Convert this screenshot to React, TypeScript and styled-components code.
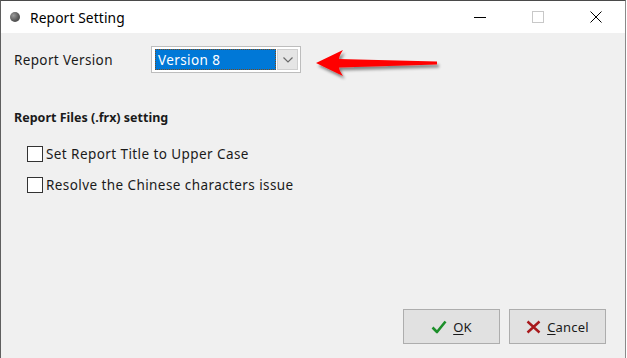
import React from "react";
import styled, { createGlobalStyle } from "styled-components";

const Global = createGlobalStyle`
  html, body { margin: 0; padding: 0; background: #ffffff; }
  body { font-family: "Noto Sans", "Open Sans", sans-serif; }
  * { box-sizing: border-box; }
`;

const Window = styled.div`
  width: 626px;
  height: 358px;
  border-top: 1px solid #4a4a4a;
  border-left: 1px solid #5f5f5f;
  border-right: 1px solid #8a8a8a;
  display: flex;
  flex-direction: column;
  position: relative;
  overflow: hidden;
`;

const TitleBar = styled.div`
  height: 32px;
  background: #ffffff;
  display: flex;
  align-items: center;
  flex-shrink: 0;
`;

const AppIcon = styled.div`
  width: 10px;
  height: 10px;
  border-radius: 50%;
  margin-left: 9px;
  margin-right: 10px;
  background: radial-gradient(circle at 35% 35%, #9a9a9a 0%, #5a5a5a 55%, #3a3a3a 100%);
`;

const Title = styled.div`
  font-family: "Noto Sans", sans-serif;
  font-size: 13.8px;
  color: #000;
  flex: 1;
  letter-spacing: 0.1px;
`;

const CaptionButton = styled.div`
  width: 58px;
  height: 32px;
  display: flex;
  align-items: center;
  justify-content: center;
`;

const Body = styled.div`
  flex: 1;
  background: #f0f0f0;
  display: flex;
  flex-direction: column;
  padding: 13px 19px 13px 13px;
  font-family: "Noto Sans", sans-serif;
  font-size: 13.5px;
  letter-spacing: 0.42px;
  color: #1a1a1a;
`;

const VersionRow = styled.div`
  display: flex;
  align-items: center;
  height: 27px;
`;

const FieldLabel = styled.div`
  width: 137px;
  letter-spacing: 0.35px;
`;

const Combo = styled.div`
  width: 150px;
  height: 27px;
  border: 1px solid #bdbdbd;
  background: #ffffff;
  display: flex;
  align-items: stretch;
  padding: 2px 2px 2px 3px;
  letter-spacing: 0.4px;
`;

const Selection = styled.div`
  flex: 1;
  background: #0078d7;
  color: #ffffff;
  border: 1px dotted #7a4a1a;
  display: flex;
  align-items: center;
  padding-left: 2px;
`;

const DropButton = styled.div`
  width: 21px;
  background: #e5e5e5;
  border: 1px solid #cfcfcf;
  margin-left: 1px;
  display: flex;
  align-items: center;
  justify-content: center;
`;

const SectionTitle = styled.div`
  font-weight: 700;
  font-size: 12.5px;
  letter-spacing: 0;
  margin-top: 36px;
`;

const CheckList = styled.div`
  display: flex;
  flex-direction: column;
  gap: 13px;
  margin-top: 19px;
  padding-left: 13px;
`;

const CheckRow = styled.label`
  display: flex;
  align-items: center;
  gap: 3px;
  height: 18px;
`;

const Box = styled.span`
  width: 16px;
  height: 16px;
  border: 1px solid #333333;
  background: #ffffff;
  display: inline-block;
`;

const Spacer = styled.div`
  flex: 1;
`;

const Footer = styled.div`
  display: flex;
  justify-content: flex-end;
  gap: 9px;
  margin-bottom: 1px;
`;

const Button = styled.div`
  width: 97px;
  height: 35px;
  background: #e1e1e1;
  border: 1px solid #adadad;
  display: flex;
  align-items: center;
  justify-content: center;
  gap: 6px;
  color: #1a1a1a;
  font-size: 13px;
  letter-spacing: 0.2px;
`;

const Mnemonic = styled.span`
  text-decoration: underline;
  text-underline-offset: 2px;
`;

const ArrowOverlay = styled.svg`
  position: absolute;
  left: 305px;
  top: 42px;
  overflow: visible;
`;

export default function App() {
  return (
    <>
      <Global />
      <Window>
        <TitleBar>
          <AppIcon />
          <Title>Report Setting</Title>
          <CaptionButton>
            <svg width="12" height="12" viewBox="0 0 12 12">
              <line x1="0" y1="6.5" x2="12" y2="6.5" stroke="#000" strokeWidth="1" />
            </svg>
          </CaptionButton>
          <CaptionButton>
            <svg width="12" height="12" viewBox="0 0 12 12">
              <rect x="0.5" y="0.5" width="11" height="11" fill="none" stroke="#c8c8c8" strokeWidth="1" />
            </svg>
          </CaptionButton>
          <CaptionButton>
            <svg width="12" height="12" viewBox="0 0 12 12">
              <path d="M0.5 0.5 L11.5 11.5 M11.5 0.5 L0.5 11.5" stroke="#000" strokeWidth="1" />
            </svg>
          </CaptionButton>
        </TitleBar>
        <Body>
          <VersionRow>
            <FieldLabel>Report Version</FieldLabel>
            <Combo>
              <Selection>Version 8</Selection>
              <DropButton>
                <svg width="10" height="6" viewBox="0 0 10 6">
                  <path d="M0.5 0.5 L5 5 L9.5 0.5" fill="none" stroke="#6a6a6a" strokeWidth="1.2" />
                </svg>
              </DropButton>
            </Combo>
          </VersionRow>
          <SectionTitle>Report Files (.frx) setting</SectionTitle>
          <CheckList>
            <CheckRow>
              <Box />
              <span>Set Report Title to Upper Case</span>
            </CheckRow>
            <CheckRow>
              <Box />
              <span>Resolve the Chinese characters issue</span>
            </CheckRow>
          </CheckList>
          <Spacer />
          <Footer>
            <Button>
              <svg width="16" height="14" viewBox="0 0 16 14">
                <path d="M1.5 7.5 L6 12 L14.5 1.5" fill="none" stroke="#1d8f2a" strokeWidth="2.6" strokeLinejoin="round" />
              </svg>
              <span><Mnemonic>O</Mnemonic>K</span>
            </Button>
            <Button>
              <svg width="15" height="14" viewBox="0 0 15 14">
                <path d="M1.5 1.5 L13.5 12.5 M13.5 1.5 L1.5 12.5" fill="none" stroke="#a8191c" strokeWidth="2.4" />
              </svg>
              <span><Mnemonic>C</Mnemonic>ancel</span>
            </Button>
          </Footer>
        </Body>
        <ArrowOverlay width="135" height="40" viewBox="0 0 135 40">
          <defs>
            <filter id="sh" x="-10%" y="-30%" width="130%" height="180%">
              <feGaussianBlur in="SourceAlpha" stdDeviation="1.6" />
              <feOffset dx="2" dy="3" result="b" />
              <feComponentTransfer>
                <feFuncA type="linear" slope="0.45" />
              </feComponentTransfer>
              <feMerge>
                <feMergeNode />
                <feMergeNode in="SourceGraphic" />
              </feMerge>
            </filter>
          </defs>
          <path
            d="M10 20 L37 7 Q33 13 33 16 L131 18.5 L131 21.5 L33 24.5 Q33 27 37 33 Z"
            fill="#ff0000"
            filter="url(#sh)"
          />
        </ArrowOverlay>
      </Window>
    </>
  );
}
